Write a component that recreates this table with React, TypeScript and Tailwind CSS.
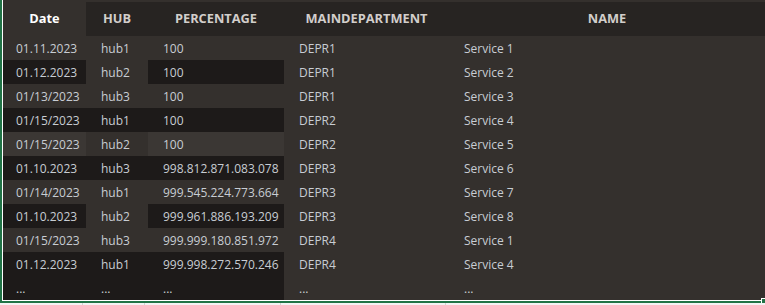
import React from "react";

type Shade = "n" | "d" | "l";

const rows: { date: string; hub: string; pct: string; dep: string; name: string; s: [Shade, Shade, Shade] }[] = [
  { date: "01.11.2023", hub: "hub1", pct: "100", dep: "DEPR1", name: "Service 1", s: ["n", "n", "n"] },
  { date: "01.12.2023", hub: "hub2", pct: "100", dep: "DEPR1", name: "Service 2", s: ["d", "n", "d"] },
  { date: "01/13/2023", hub: "hub3", pct: "100", dep: "DEPR1", name: "Service 3", s: ["n", "n", "n"] },
  { date: "01/15/2023", hub: "hub1", pct: "100", dep: "DEPR2", name: "Service 4", s: ["d", "d", "d"] },
  { date: "01/15/2023", hub: "hub2", pct: "100", dep: "DEPR2", name: "Service 5", s: ["l", "n", "l"] },
  { date: "01.10.2023", hub: "hub3", pct: "998.812.871.083.078", dep: "DEPR3", name: "Service 6", s: ["d", "d", "d"] },
  { date: "01/14/2023", hub: "hub1", pct: "999.545.224.773.664", dep: "DEPR3", name: "Service 7", s: ["n", "n", "n"] },
  { date: "01.10.2023", hub: "hub2", pct: "999.961.886.193.209", dep: "DEPR3", name: "Service 8", s: ["d", "n", "d"] },
  { date: "01/15/2023", hub: "hub3", pct: "999.999.180.851.972", dep: "DEPR4", name: "Service 1", s: ["n", "n", "n"] },
  { date: "01.12.2023", hub: "hub1", pct: "999.998.272.570.246", dep: "DEPR4", name: "Service 4", s: ["d", "d", "d"] },
  { date: "...", hub: "...", pct: "...", dep: "...", name: "...", s: ["d", "d", "d"] },
];

const shadeClass: Record<Shade, string> = {
  n: "bg-[#34302d]",
  d: "bg-[#1d1a19]",
  l: "bg-[#3b3734]",
};

const cols = "grid grid-cols-[83px_62px_136px_165px_1fr]";

export default function App() {
  return (
    <div
      className="relative w-[765px] h-[305px] overflow-hidden bg-[#f3f3f3]"
      style={{ fontFamily: '"Open Sans", "Noto Sans", sans-serif' }}
    >
      <div className="border-l-2 border-b-2 border-[#217346]">
        <div className="border-l border-b border-white bg-[#34302d]">
          {/* header */}
          <div className={`${cols} h-[36px] pt-[2px] text-[12.8px] font-bold`}>
            <div className="flex items-center justify-center bg-[#34302d] text-white">Date</div>
            <div className="flex items-center justify-center bg-[#272422] text-[#d2cecb]">HUB</div>
            <div className="flex items-center justify-center bg-[#272422] text-[#d2cecb]">PERCENTAGE</div>
            <div className="flex items-center justify-center bg-[#272422] text-[#d2cecb]">MAINDEPARTMENT</div>
            <div className="flex items-center justify-center bg-[#272422] text-[#d2cecb]">NAME</div>
          </div>
          {rows.map((r, i) => (
            <div key={i} className={`${cols} h-[24px] text-[12px] text-[#c8cdd3]`}>
              <div className={`flex items-center pl-[13px] pt-[2px] ${shadeClass[r.s[0]]}`}>{r.date}</div>
              <div className={`flex items-center pl-[15px] pt-[2px] ${shadeClass[r.s[1]]}`}>{r.hub}</div>
              <div className={`flex items-center pl-[15px] pt-[2px] ${shadeClass[r.s[2]]}`}>{r.pct}</div>
              <div className="flex items-center pl-[15px] pt-[2px]">{r.dep}</div>
              <div className="flex items-center pl-[15px] pt-[2px]">{r.name}</div>
            </div>
          ))}
        </div>
      </div>
      <div className={`${cols} h-[2px]`}>
        <div className="border-r border-[#d4d4d4]" />
        <div className="border-r border-[#d4d4d4]" />
        <div className="border-r border-[#d4d4d4]" />
        <div className="border-r border-[#d4d4d4]" />
        <div />
      </div>
      <div className="absolute right-0 bottom-[2px] w-[4px] h-[5px] bg-[#217346] border-l border-t border-white" />
    </div>
  );
}
